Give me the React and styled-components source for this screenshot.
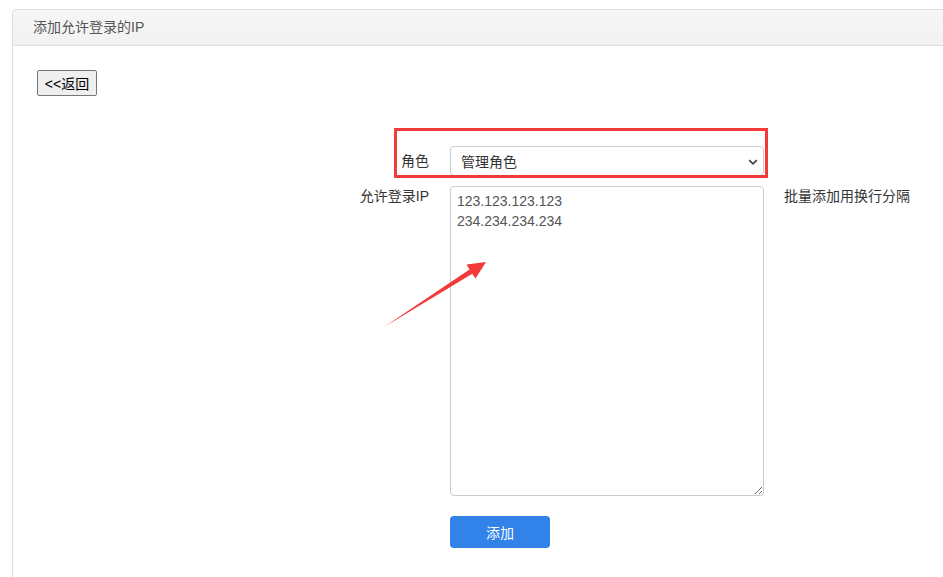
import React from "react";
import styled, { createGlobalStyle } from "styled-components";

const GlobalStyle = createGlobalStyle`
  html, body {
    margin: 0;
    padding: 0;
    background: #fff;
    font-family: "Liberation Sans", "Noto Sans CJK SC", sans-serif;
    font-size: 14px;
    color: #333;
    overflow: hidden;
  }
`;

const Page = styled.div`
  position: relative;
  width: 943px;
  height: 577px;
  padding: 9px 0 0 12px;
  box-sizing: border-box;
  overflow: hidden;
`;

const Panel = styled.div`
  width: 960px;
  min-height: 620px;
  border: 1px solid #ddd;
  border-top-left-radius: 4px;
  box-sizing: border-box;
`;

const PanelHeader = styled.div`
  height: 35px;
  line-height: 35px;
  padding-left: 20px;
  background: linear-gradient(#f6f6f6, #f2f2f2);
  border-bottom: 1px solid #ddd;
  border-top-left-radius: 4px;
  color: #555;
  font-size: 14px;
`;

const PanelBody = styled.div`
  padding: 24px;
`;

const BackButton = styled.button`
  display: block;
  width: 60px;
  height: 26px;
  padding: 0;
  border: 1px solid #767676;
  border-radius: 2px;
  background: #efefef;
  font-family: inherit;
  font-size: 14px;
  color: #000;
`;

const Form = styled.div`
  display: grid;
  grid-template-columns: 392px 314px auto;
  column-gap: 21px;
  row-gap: 10px;
  margin-top: 50px;
  align-items: start;
`;

const Label = styled.div`
  text-align: right;
  color: #333;
  line-height: ${(p) => (p.$center ? "30px" : "20px")};
`;

const SelectBox = styled.div`
  position: relative;
  height: 30px;
  border: 1px solid #ccc;
  border-radius: 4px;
  box-sizing: border-box;
  display: flex;
  align-items: center;
  padding-left: 10px;
  color: #333;
`;

const Chevron = styled.svg`
  position: absolute;
  right: 4px;
  top: 9px;
`;

const TextArea = styled.textarea`
  display: block;
  width: 314px;
  height: 310px;
  margin: 0;
  padding: 4px 6px;
  border: 1px solid #ccc;
  border-radius: 4px;
  box-sizing: border-box;
  font-family: "Liberation Sans", "Noto Sans CJK SC", sans-serif;
  font-size: 14px;
  line-height: 20px;
  color: #555;
  resize: both;
  outline: none;
`;

const Hint = styled.div`
  line-height: 20px;
  margin-left: -1px;
  color: #333;
`;

const SubmitButton = styled.button`
  grid-column: 2;
  width: 100px;
  height: 32px;
  margin-top: 10px;
  border: none;
  border-radius: 4px;
  background: #3182e9;
  color: #fff;
  font-family: inherit;
  font-size: 14px;
`;

const MarkBox = styled.div`
  position: absolute;
  left: 394px;
  top: 128px;
  width: 374px;
  height: 50px;
  border: 3px solid #f23a3a;
  box-sizing: border-box;
  pointer-events: none;
`;

const ArrowLayer = styled.svg`
  position: absolute;
  left: 0;
  top: 0;
  pointer-events: none;
`;

export default function App() {
  return (
    <>
      <GlobalStyle />
      <Page>
        <Panel>
          <PanelHeader>添加允许登录的IP</PanelHeader>
          <PanelBody>
            <BackButton>&lt;&lt;返回</BackButton>
            <Form>
              <Label $center>角色</Label>
              <SelectBox>
                管理角色
                <Chevron width="12" height="12" viewBox="0 0 12 12">
                  <path d="M2.2 4.2 L6 7.8 L9.8 4.2" fill="none" stroke="#444" strokeWidth="1.8" />
                </Chevron>
              </SelectBox>
              <div />
              <Label>允许登录IP</Label>
              <TextArea
                defaultValue={"123.123.123.123\n234.234.234.234"}
                spellCheck={false}
              />
              <Hint>批量添加用换行分隔</Hint>
              <SubmitButton>添加</SubmitButton>
            </Form>
          </PanelBody>
        </Panel>
        <MarkBox />
        <ArrowLayer width="943" height="577" viewBox="0 0 943 577">
          <polygon
            points="384,327 469.5,269.6 466.5,264.5 486,262 475.5,278.5 472.3,273.8"
            fill="#f23a3a"
          />
        </ArrowLayer>
      </Page>
    </>
  );
}
